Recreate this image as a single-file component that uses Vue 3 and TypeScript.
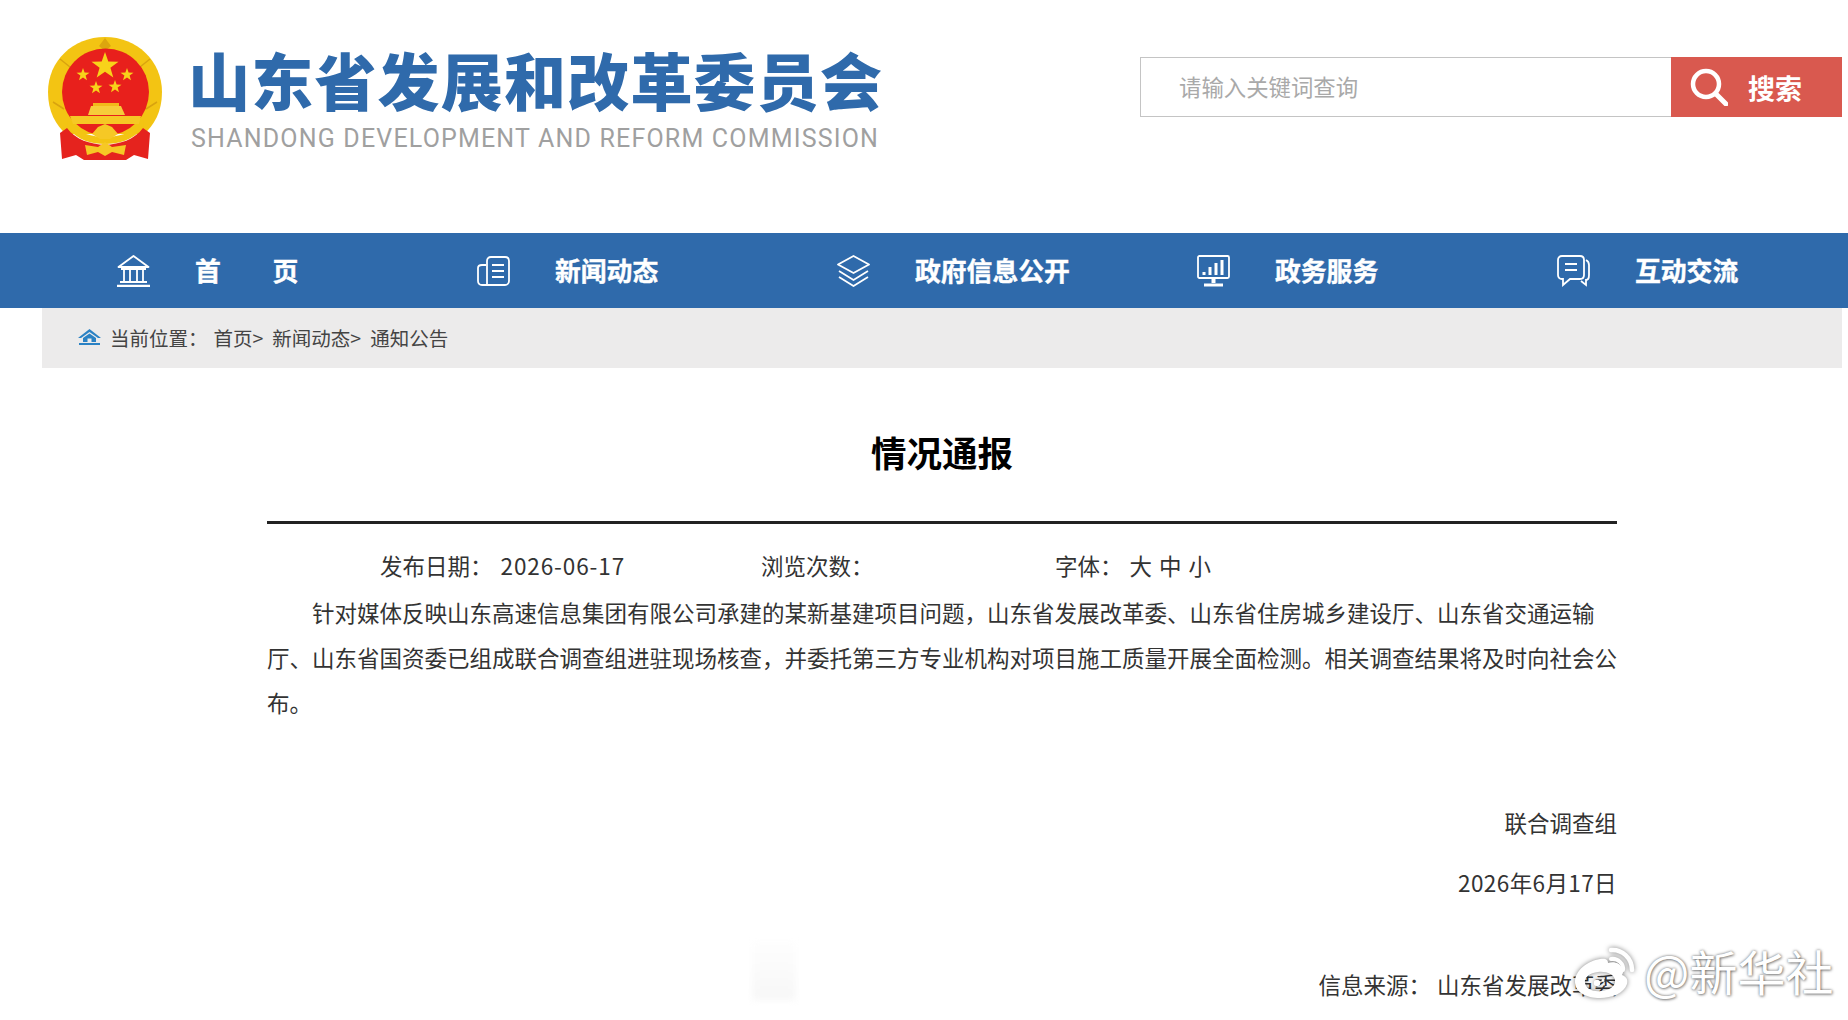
<script setup lang="ts">
interface NavItem {
  key: 'home' | 'news' | 'layers' | 'chart' | 'chat'
  label: string
}

const navItems: NavItem[] = [
  { key: 'home', label: '首\u3000\u3000页' },
  { key: 'news', label: '新闻动态' },
  { key: 'layers', label: '政府信息公开' },
  { key: 'chart', label: '政务服务' },
  { key: 'chat', label: '互动交流' }
]

const crumbs = ['首页>', '新闻动态>', '通知公告']
</script>

<template>
  <div class="page">
    <header class="header">
      <svg class="emblem" viewBox="0 0 114 123">
        <path d="M57 0C89 0 114 24 114 55C114 75 106 88 96 97H18C8 88 0 75 0 55C0 24 25 0 57 0Z" fill="#f3c413" />
        <path d="M57 1L63 9L57 14L51 9Z" fill="#dca60e" />
        <path d="M5 65L16 72M109 65L98 72M12 22L22 30M102 22L92 30" stroke="#d9a30f" stroke-width="1.5" />
        <circle cx="57.5" cy="55" r="43.5" fill="#e8201c" />
        <polygon fill="#f8d21a" points="57,15 60.3,24.5 70.5,24.7 62.4,30.8 65.3,40.5 57,34.7 48.7,40.5 51.6,30.8 43.5,24.7 53.7,24.5" />
        <polygon fill="#f8d21a" points="35,31 36.6,35.6 41.5,35.7 37.6,38.6 39,43.3 35,40.5 31,43.3 32.4,38.6 28.5,35.7 33.4,35.6" />
        <polygon fill="#f8d21a" points="79,31 80.6,35.6 85.5,35.7 81.6,38.6 83,43.3 79,40.5 75,43.3 76.4,38.6 72.5,35.7 77.4,35.6" />
        <polygon fill="#f8d21a" points="48,44 49.6,48.6 54.5,48.7 50.6,51.6 52,56.3 48,53.5 44,56.3 45.4,51.6 41.5,48.7 46.4,48.6" />
        <polygon fill="#f8d21a" points="67,43 68.6,47.6 73.5,47.7 69.6,50.6 71,55.3 67,52.5 63,55.3 64.4,50.6 60.5,47.7 65.4,47.6" />
        <path d="M40 78L43 69H73L77 78Z" fill="#f6cd3a" />
        <rect x="45" y="66" width="26" height="3" fill="#f2b91a" />
        <path d="M22 79H93L91 87H25Z" fill="#f6c825" />
        <path d="M20 84C32 97 44 100 57 100C70 100 83 97 95 84L96 90C84 104 70 107 57 107C44 107 30 104 19 90Z" fill="#f3c413" />
        <path d="M30 87C42 93 72 93 85 87C76 95 68 96 57 96C46 96 38 95 30 87Z" fill="#e8201c" />
        <path d="M12 96L19 91C28 103 42 107 57 108C72 107 86 103 95 91L102 96L100 122L86 118L78 123H36L28 118L14 122Z" fill="#e5231e" />
        <path d="M44 97L50 90L57 87L64 90L70 97L62 102H52Z" fill="#f6c825" />
        <path d="M37 108L50 110L57 105L64 110L78 108L76 118L64 115L57 119L50 115L39 118Z" fill="#f6c825" />
      </svg>
      <div class="brand">
        <div class="brand-cn">山东省发展和改革委员会</div>
        <div class="brand-en">SHANDONG DEVELOPMENT AND REFORM COMMISSION</div>
      </div>
      <div class="search">
        <div class="search-input">请输入关键词查询</div>
        <button class="search-btn" type="button">
          <svg class="search-icon" viewBox="0 0 38 38" fill="none" stroke="#fff">
            <circle cx="16" cy="16" r="13" stroke-width="4.5" />
            <path d="M26 26L36 36" stroke-width="5" stroke-linecap="round" />
          </svg>
          <span>搜索</span>
        </button>
      </div>
    </header>

    <nav class="nav">
      <a v-for="item in navItems" :key="item.key" class="nav-item">
        <svg class="nav-icon" viewBox="0 0 33 32" fill="none" stroke="#fff" stroke-width="1.8">
          <template v-if="item.key === 'home'">
            <path d="M1.5 12L16.5 1L31.5 12Z" stroke-linejoin="round" />
            <path d="M4 14H29M7 15V26M13 15V26M20 15V26M26 15V26M3 27H30" />
            <path d="M0 31H33" stroke-width="2.4" />
          </template>
          <template v-else-if="item.key === 'news'">
            <path d="M10 29V6C10 3.5 11.5 2 14 2H28C30.5 2 32 3.5 32 6V26C32 28 30.5 30 28 30H5C2.5 30 1 28.5 1 26V13C1 11 2.5 10 5 10H9" />
            <path d="M15 10H27M15 16H27M15 22H27" />
          </template>
          <template v-else-if="item.key === 'layers'">
            <path d="M16.5 1L32 9.5L16.5 18L1 9.5Z" stroke-linejoin="round" />
            <path d="M2 16L16.5 25L31 16M2 22L16.5 31L31 22" />
          </template>
          <template v-else-if="item.key === 'chart'">
            <rect x="1" y="1" width="31" height="22" rx="1.5" />
            <path d="M7 20V17M13 20V12M19 20V8M25 20V5" stroke-width="3" />
            <path d="M16.5 23V28" stroke-width="4" />
            <path d="M7 30H26" stroke-width="3" />
          </template>
          <template v-else>
            <path d="M5 1H23C25.5 1 27 2.5 27 5V20C27 22.5 25.5 24 23 24H13L6 30V24H5C2.5 24 1 22.5 1 20V5C1 2.5 2.5 1 5 1Z" />
            <path d="M8 9H20M8 15H20" />
            <path d="M29 5C31 6 32 8 32 10V20C32 23 31 25 29 25V30L24 26" />
          </template>
        </svg>
        <span class="nav-label">{{ item.label }}</span>
      </a>
    </nav>

    <div class="crumb">
      <svg class="crumb-icon" viewBox="0 0 23 16">
        <path d="M11.5 0L23 9H20L11.5 3L3 9H0Z" fill="#2b82c4" />
        <path d="M5 9L11.5 4.5L18 9V13H5ZM9.5 13H13.5V9.5H9.5Z" fill="#2b82c4" fill-rule="evenodd" />
        <rect x="1" y="14" width="21" height="2" fill="#2b82c4" />
      </svg>
      <span class="crumb-title">当前位置：</span>
      <span v-for="c in crumbs" :key="c" class="crumb-link">{{ c }}</span>
    </div>

    <main class="article">
      <h1 class="title">情况通报</h1>
      <div class="meta">
        <span class="meta-date">发布日期：<span class="num">2026-06-17</span></span>
        <span class="meta-views">浏览次数：</span>
        <span>字体：<span class="sizes">大 中 小</span></span>
      </div>
      <p class="body-text">针对媒体反映山东高速信息集团有限公司承建的某新基建项目问题，山东省发展改革委、山东省住房城乡建设厅、山东省交通运输厅、山东省国资委已组成联合调查组进驻现场核查，并委托第三方专业机构对项目施工质量开展全面检测。相关调查结果将及时向社会公布。</p>
      <div class="sign sign-org">联合调查组</div>
      <div class="sign sign-date">2026年6月17日</div>
      <div class="sign sign-source">信息来源：<span class="source-name">山东省发展改革委</span></div>
    </main>

    <!-- 右下角水印 -->
    <div class="ghost"></div>
    <div class="watermark">
      <svg class="weibo" viewBox="0 0 64 53">
        <path fill-rule="evenodd" fill="#fff" d="M1 36C1 24 14 15 26 13C32 12 34 14 34 17C40 15 46 17 48 22C50 25 49 27 48 29C53 31 54 34 53 38C50 47 38 52 26 52C12 52 1 46 1 36ZM11 37C12 43 19 46 27 45C36 44 42 40 41 34C40 28 32 25 24 26C16 27 10 31 11 37Z" />
        <circle cx="23" cy="37" r="3.2" fill="#fff" />
        <circle cx="29" cy="34.5" r="1.4" fill="#fff" />
        <path d="M37 4C48 3 58 12 58 24" fill="none" stroke="#fff" stroke-width="4.5" stroke-linecap="round" />
        <path d="M37 13C44 12 50 18 49 24" fill="none" stroke="#fff" stroke-width="4" stroke-linecap="round" />
      </svg>
      <span class="wm-text">@新华社</span>
    </div>
  </div>
</template>

<style scoped>
.page {
  position: relative;
  width: 1848px;
  height: 1020px;
  overflow: hidden;
  background: #fff;
  color: #333;
  font-family: "Noto Sans CJK SC", "Noto Sans", sans-serif;
}

.header {
  display: flex;
  align-items: flex-start;
  height: 233px;
  padding: 37px 6px 0 48px;
  box-sizing: border-box;
}

.emblem {
  width: 114px;
  height: 123px;
  flex: none;
}

.brand {
  margin-left: 26px;
  width: 700px;
}

.brand-cn {
  margin-top: 5px;
  height: 74px;
  line-height: 74px;
  font-size: 62px;
  font-weight: 900;
  letter-spacing: 1.2px;
  color: #2f6aab;
  white-space: nowrap;
}

.brand-en {
  margin: 7px 0 0 3px;
  line-height: 32px;
  font-family: Roboto, "Noto Sans", sans-serif;
  font-size: 25px;
  font-weight: 400;
  letter-spacing: 1.18px;
  color: #a0a0a0;
  white-space: nowrap;
}

.search {
  display: flex;
  margin: 20px 0 0 auto;
  height: 60px;
}

.search-input {
  width: 492px;
  padding-left: 38px;
  border: 1px solid #c4c4c4;
  border-right: none;
  line-height: 56px;
  font-size: 22.4px;
  color: #a9a9a9;
  box-sizing: content-box;
  height: 58px;
}

.search-btn {
  display: flex;
  align-items: center;
  width: 171px;
  padding: 0 0 0 19px;
  border: none;
  background: #d9594f;
  color: #fff;
  font-family: inherit;
  font-size: 27px;
  font-weight: 700;
  box-sizing: border-box;
}

.search-icon {
  width: 38px;
  height: 38px;
  margin-right: 20px;
}

.nav {
  display: grid;
  grid-template-columns: repeat(4, 360px) 1fr;
  align-items: center;
  height: 75px;
  padding-left: 117px;
  background: #2f6aab;
}

.nav-item {
  display: flex;
  align-items: center;
  color: #fff;
}

.nav-icon {
  width: 33px;
  height: 32px;
  flex: none;
}

.nav-label {
  margin: -2px 0 0 45px;
  font-size: 25.8px;
  font-weight: 700;
  line-height: 32px;
  white-space: pre;
  -webkit-text-stroke: 0.4px #fff;
}

.crumb {
  display: flex;
  align-items: center;
  height: 60px;
  margin: 0 6px 0 42px;
  padding: 0 0 2px 36px;
  box-sizing: border-box;
  background: #ecebeb;
  font-size: 19.5px;
  color: #444;
}

.crumb-icon {
  width: 23px;
  height: 16px;
  margin-right: 9px;
}

.crumb-title {
  margin-right: 6px;
}

.crumb-link {
  margin-right: 9px;
}

.article {
  width: 1350px;
  margin-left: 267px;
}

.title {
  margin: 0;
  padding: 59px 0 44px;
  border-bottom: 3px solid #222;
  line-height: 50px;
  font-size: 35.5px;
  font-weight: 700;
  color: #000;
  text-align: center;
}

.meta {
  display: flex;
  margin-top: 21px;
  padding-left: 113px;
  height: 40px;
  line-height: 40px;
  font-size: 22.5px;
}

.meta-date {
  width: 381px;
}

.meta-views {
  width: 294px;
}

.num {
  margin-left: 8px;
  letter-spacing: 0.9px;
}

.sizes {
  margin-left: 7px;
  letter-spacing: 1px;
}

.body-text {
  margin: 5px 0 0;
  font-size: 22.5px;
  line-height: 45px;
  text-indent: 45px;
}

.sign {
  font-size: 22.5px;
  line-height: 45px;
  text-align: right;
}

.sign-org {
  margin-top: 75px;
}

.sign-date {
  margin-top: 15px;
  letter-spacing: 0.4px;
}

.sign-source {
  margin-top: 57px;
}

.source-name {
  margin-left: 6px;
}

.ghost {
  position: absolute;
  left: 752px;
  top: 942px;
  width: 44px;
  height: 58px;
  background: linear-gradient(to bottom, #fefefe, #f7f7f7);
  filter: blur(3px);
}

.watermark {
  position: absolute;
  left: 1574px;
  top: 941px;
  display: flex;
  align-items: flex-end;
}

.weibo {
  width: 64px;
  height: 53px;
  filter: drop-shadow(0 0 2.5px rgba(0, 0, 0, 0.5));
}

.wm-text {
  margin-left: 6px;
  font-size: 48px;
  line-height: 58px;
  color: #fff;
  text-shadow: 0 0 3px rgba(0, 0, 0, 0.55), 1px 1px 3px rgba(0, 0, 0, 0.35);
  white-space: nowrap;
}
</style>

<style>
html,
body {
  margin: 0;
  background: #fff;
}
</style>
